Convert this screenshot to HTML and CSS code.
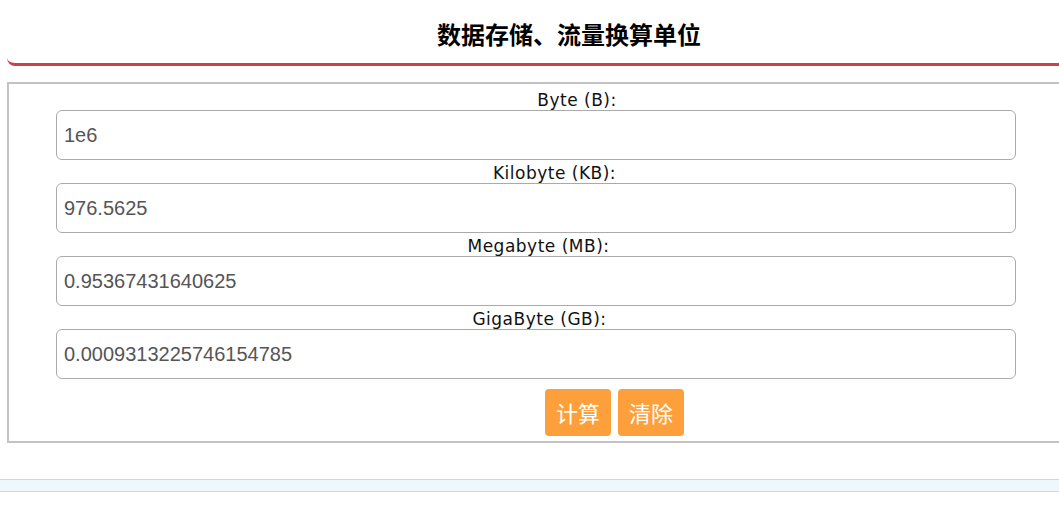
FILE: index.html
```html
<!DOCTYPE html>
<html lang="zh-CN">
<head>
<meta charset="utf-8">
<title>数据存储、流量换算单位</title>
<link rel="stylesheet" href="styles.css">
</head>
<body>
<div class="header">
  <h1 class="title">数据存储、流量换算单位</h1>
</div>
<div class="panel">
  <div class="field">
    <label class="lbl lbl-b">Byte (B):</label>
    <input class="num" type="text" value="1e6">
  </div>
  <div class="field">
    <label class="lbl lbl-kb">Kilobyte (KB):</label>
    <input class="num" type="text" value="976.5625">
  </div>
  <div class="field">
    <label class="lbl lbl-mb">Megabyte (MB):</label>
    <input class="num" type="text" value="0.95367431640625">
  </div>
  <div class="field">
    <label class="lbl lbl-gb">GigaByte (GB):</label>
    <input class="num" type="text" value="0.0009313225746154785">
  </div>
  <div class="actions">
    <button class="btn" type="button">计算</button>
    <button class="btn" type="button">清除</button>
  </div>
</div>
<div class="footbar"></div>
</body>
</html>
```
FILE: styles.css
```css
html, body {
  margin: 0;
  padding: 0;
  background: #ffffff;
}
body {
  overflow-x: hidden;
  font-family: "DejaVu Sans", Verdana, sans-serif;
  color: #000;
}
.header {
  margin-left: 7px;
  height: 63px;
  padding-left: 72px;
  border-bottom: 3px solid #c9424b;
  border-bottom-left-radius: 8px;
  box-sizing: content-box;
}
.title {
  margin: 0;
  padding-top: 22px;
  line-height: 24px;
  font-size: 24px;
  font-weight: bold;
  text-align: center;
  font-family: "Noto Sans CJK SC", "Noto Sans", sans-serif;
  color: #000;
}
.panel {
  margin: 16px -60px 0 7px;
  border: 2px solid #c3c3c3;
  padding: 3px 0 5px 0;
}
.field {
  display: flex;
  flex-direction: column;
}
.lbl {
  display: block;
  width: 960px;
  margin-left: 47px;
  height: 23px;
  padding-top: 3px;
  line-height: 20px;
  font-size: 17px;
  letter-spacing: 0.5px;
  text-align: center;
  color: #111;
  box-sizing: border-box;
}
.lbl-b { padding-left: 82px; }
.lbl-kb { padding-left: 37px; }
.lbl-mb { padding-left: 5px; }
.lbl-gb { padding-left: 7px; }
.num {
  display: block;
  margin: 0 0 0 47px;
  width: 960px;
  height: 50px;
  box-sizing: border-box;
  border: 1px solid #aaaaaa;
  border-radius: 6px;
  padding: 0 7px;
  font-family: "Liberation Sans", Arial, sans-serif;
  font-size: 20px;
  color: #555555;
  background: #fff;
  outline: none;
}
.actions {
  display: flex;
  gap: 7px;
  margin-top: 10px;
  margin-left: 536px;
}
.btn {
  width: 66px;
  height: 47px;
  border: 0;
  border-radius: 4px;
  background: #fda03b;
  color: #fff;
  font-family: "Noto Sans CJK SC", "Noto Sans", sans-serif;
  font-size: 22px;
  line-height: 47px;
  padding: 0;
}
.footbar {
  margin-top: 36px;
  height: 11px;
  background: #eef7fc;
  border-top: 1px solid #b9def0;
  border-bottom: 1px solid #b9def0;
}
```
